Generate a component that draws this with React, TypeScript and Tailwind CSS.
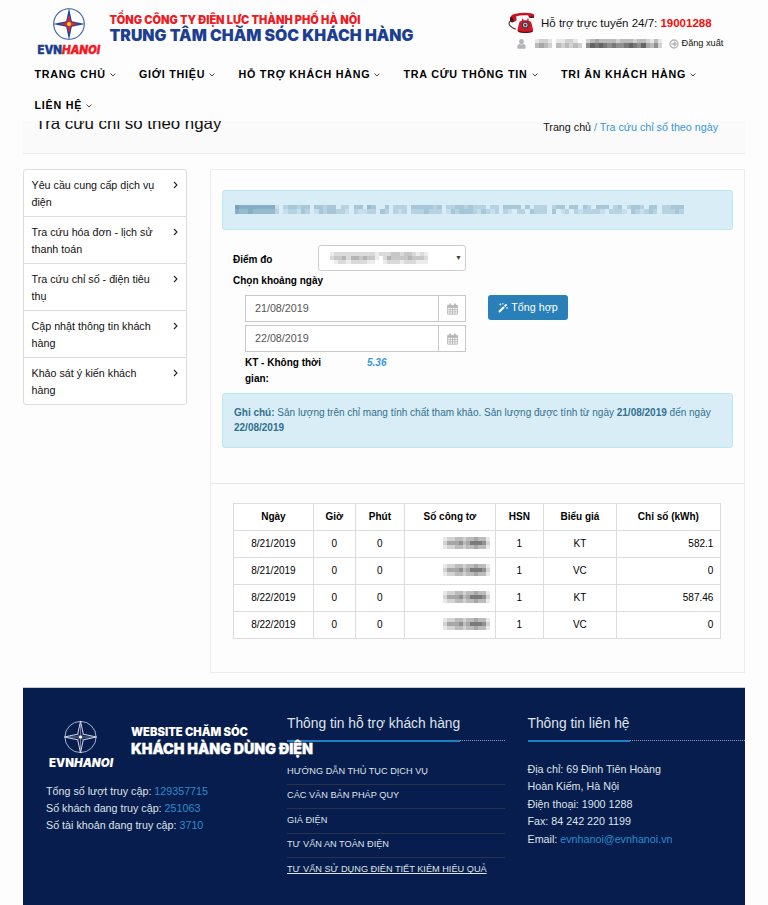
import React from "react";

const navItems = [
  { label: "TRANG CHỦ", w: "w-[104.5px]" },
  { label: "GIỚI THIỆU", w: "w-[99.5px]" },
  { label: "HỖ TRỢ KHÁCH HÀNG", w: "w-[165px]" },
  { label: "TRA CỨU THÔNG TIN", w: "w-[157.5px]" },
  { label: "TRI ÂN KHÁCH HÀNG", w: "w-[160px]" },
  { label: "LIÊN HỆ", w: "w-[80px]" },
];

const sideItems = [
  "Yêu cầu cung cấp dịch vụ điện",
  "Tra cứu hóa đơn - lịch sử thanh toán",
  "Tra cứu chỉ số - điện tiêu thụ",
  "Cập nhật thông tin khách hàng",
  "Khảo sát ý kiến khách hàng",
];

const rows = [
  ["8/21/2019", "KT", "582.1"],
  ["8/21/2019", "VC", "0"],
  ["8/22/2019", "KT", "587.46"],
  ["8/22/2019", "VC", "0"],
];

const links = [
  "HƯỚNG DẪN THỦ TỤC DỊCH VỤ",
  "CÁC VĂN BẢN PHÁP QUY",
  "GIÁ ĐIỆN",
  "TƯ VẤN AN TOÀN ĐIỆN",
  "TƯ VẤN SỬ DỤNG ĐIỆN TIẾT KIỆM HIỆU QUẢ",
];

/* Pixelated stand-in for private values; each digit is the darkness of one block. */
function Mosaic({ lines, cell, color, className }: { lines: string[]; cell: number; color: string; className?: string }) {
  const w = lines[0].length * cell;
  const h = lines.length * cell;
  return (
    <svg width={w} height={h} viewBox={`0 0 ${w} ${h}`} className={className} shapeRendering="crispEdges">
      {lines.map((line, y) =>
        line.split("").map((d, x) => (
          <rect key={`${x}-${y}`} x={x * cell} y={y * cell} width={cell} height={cell} fill={color} opacity={Number(d) / 10} />
        ))
      )}
    </svg>
  );
}

const star = "M0 -16 L2.8 -2.8 L16 0 L2.8 2.8 L0 16 L-2.8 2.8 L-16 0 L-2.8 -2.8Z";

function HeaderLogo() {
  return (
    <svg width="380" height="58" viewBox="0 0 380 58" className="font-['Inter',sans-serif] font-black">
      <g transform="translate(32 24)">
        <circle r="15.3" fill="none" stroke="#3a5ea8" strokeWidth="1.1" />
        <path d={star} fill="#1f4596" />
        <path d="M0 -8 L1.5 -1.5 L8 0 L1.5 1.5 L0 8 L-1.5 1.5 L-8 0 L-1.5 -1.5Z" fill="#e8252b" stroke="#e8252b" strokeWidth=".8" />
        <circle r="2" fill="#ffd42a" />
      </g>
      <text x="0.5" y="53.5" fontSize="11.5" fill="#1d3f91" stroke="#1d3f91" strokeWidth=".3" textLength="24.5" lengthAdjust="spacingAndGlyphs">EVN</text>
      <text x="25" y="53.5" fontSize="11.5" fontStyle="italic" fill="#ee1c25" stroke="#ee1c25" strokeWidth=".3" textLength="38" lengthAdjust="spacingAndGlyphs">HANOI</text>
      <text x="72.5" y="24" fontSize="11.3" fill="#ee1c25" textLength="251" lengthAdjust="spacingAndGlyphs">TỔNG CÔNG TY ĐIỆN LỰC THÀNH PHỐ HÀ NỘI</text>
      <text x="72.5" y="41" fontSize="15.6" fill="#1d3f91" textLength="304" lengthAdjust="spacingAndGlyphs">TRUNG TÂM CHĂM SÓC KHÁCH HÀNG</text>
    </svg>
  );
}

function FooterLogo() {
  return (
    <svg width="270" height="52" viewBox="0 0 270 52" className="font-['Inter',sans-serif] font-black" fill="#fff">
      <g transform="translate(31.5 18)">
        <circle r="15.6" fill="none" stroke="#b9c1d4" strokeWidth=".9" />
        <path d={star} fill="#0d2050" stroke="#e8ebf2" strokeWidth=".9" />
        <path d="M0 -14V14M-14 0H14M-3 -3L3 3M-3 3L3 -3" stroke="#cdd3e0" strokeWidth=".5" />
        <circle r="1.6" />
      </g>
      <text x="0" y="48" fontSize="11.5" textLength="25" lengthAdjust="spacingAndGlyphs">EVN</text>
      <text x="25" y="48" fontSize="11.5" fontStyle="italic" textLength="39" lengthAdjust="spacingAndGlyphs">HANOI</text>
      <text x="82" y="17" fontSize="11.3" textLength="117" lengthAdjust="spacingAndGlyphs">WEBSITE CHĂM SÓC</text>
      <text x="82" y="35" fontSize="14" stroke="#fff" strokeWidth=".3" textLength="182" lengthAdjust="spacingAndGlyphs">KHÁCH HÀNG DÙNG ĐIỆN</text>
    </svg>
  );
}

function Phone() {
  return (
    <svg width="27" height="22" viewBox="0 0 27 22">
      <path d="M3 14.500C.5 13 .3 10 3 8.500M3 14.500c1.500 1 1.800 2.500 5 2.500" fill="none" stroke="#4a2b30" strokeWidth="1.100" />
      <path d="M9.500 17.500 11 11.500c.4-1.800 1.500-2.500 3-2.700V6.800h1.300v1.500h4V6.600h1.300v2.200c1.800.3 2.600 1.200 3 2.700l1.400 6c.2 1.400-.3 2-1.500 2.300-3.500.8-9 .8-12.500.1-1.200-.3-1.700-1-1.500-2.400z" fill="#d01826" />
      <path d="M10 18.500c4 1.800 11 1.800 15 0l-.5 1.500c-4 1.300-10 1.300-14 0z" fill="#5c1018" />
      <path d="M2.500 9.500C1.300 6 2.500 3 6.500 2 12 .6 18 .5 23 1.300c3 .5 3.800 1.500 3 3.400-.4.900-1.200 1.100-2.300.9l-2.500-.5c-.8-.2-.7-.9-.9-1.600C16.500 3 12 3.200 8.500 4.200c-.4 1-.2 2.100.2 3-.2 1.500-1.200 2.300-3 2.800-1.500.4-2.700.4-3.200-.5z" fill="#c71422" />
      <path d="M2.500 9.500C1.900 7.900 1.900 6.500 2.500 5.200c1.300-.4 2 .4 2.500 1.500.4 1.100.4 2.100 0 3.300-1.200.4-2.100.3-2.500-.5z" fill="#461419" />
      <path d="M21 4.900c1.800.6 3.800.8 5-.2" stroke="#461419" strokeWidth="1.200" fill="none" />
      <circle cx="17.300" cy="13" r="3.600" fill="#3d3d50" />
      <circle cx="17.300" cy="13" r="2.300" fill="#c3cadb" />
      <circle cx="17.300" cy="13" r="1.200" fill="#7c2030" />
    </svg>
  );
}

function Calendar() {
  return (
    <svg width="11" height="12" viewBox="0 0 11 12" fill="none" stroke="#b0b0b0" strokeWidth=".8">
      <path d="M.6 2.300h9.800v8.900H.6zM.6 4.500h9.800M.6 6.700h9.800M.6 8.900h9.800M3.100 4.500v6.700M5.500 4.500v6.700M7.900 4.500v6.700" />
      <path d="M.6 3.300h9.800" strokeWidth="1.300" />
      <path d="M3 .6v2.200M8 .6v2.200" strokeWidth="1.500" />
    </svg>
  );
}

function Wand() {
  return (
    <svg width="10" height="10" viewBox="0 0 10 10" fill="none" stroke="#fff">
      <path d="M1 9 6 4" strokeWidth="2.100" />
      <path d="M6.600 3.400 8.600 1.400" strokeWidth="1.800" />
      <path d="M2.300 .4v2M1.300 1.400h2M4.800 .2v1.200M4.200 .8h1.200M9 4.200v1.600M8.200 5h1.600" strokeWidth=".7" />
    </svg>
  );
}

function DateField({ value }: { value: string }) {
  return (
    <div className="flex h-[27px] w-[221px] border border-[#c8c8c8] bg-white">
      <div className="flex flex-1 items-center pl-[9px] text-[10.73px] text-[#555]">{value}</div>
      <div className="flex w-[27px] items-center justify-center border-l border-[#c8c8c8]">
        <Calendar />
      </div>
    </div>
  );
}

function FooterHeading({ text }: { text: string }) {
  return (
    <div className="flex h-[27px] items-start">
      <h4 className="h-[27px] border-b-2 border-[#1e80c3] text-[13.8px] leading-[18px] whitespace-nowrap">{text}</h4>
      <div className="h-[26px] flex-1 border-b border-dotted border-[#8992aa]" />
    </div>
  );
}

export default function App() {
  return (
    <div className="flex h-[905px] w-[768px] flex-col overflow-hidden bg-[#fdfdfd] font-['Liberation_Sans',Arial,sans-serif] text-[10.73px] text-[#111]">
      <header className="h-[121px] shrink-0">
        <div className="flex h-[58px] justify-between">
          <div className="pl-[37px]">
            <HeaderLogo />
          </div>
          <div className="w-[260px] pt-[12px]">
            <div className="flex h-[22px] items-center">
              <Phone />
              <span className="ml-[6px] pt-[2px] text-[11.5px] whitespace-nowrap">
                Hỗ trợ trực tuyến 24/7: <b className="text-[#fb0a0a]">19001288</b>
              </span>
            </div>
            <div className="flex h-[19px] items-center pl-[9px]">
              <svg width="9" height="10" viewBox="0 0 9 10" fill="#b5b5b5">
                <ellipse cx="4.500" cy="2.800" rx="2.300" ry="2.700" />
                <path d="M.3 8.300C.3 6.300 1.200 5 2.500 4.900c1.200 1 2.800 1 4 0C7.800 5 8.700 6.300 8.700 8.300c0 1-.6 1.500-1.400 1.500H1.700C.9 9.800.3 9.300.3 8.300z" />
              </svg>
              <Mosaic
                className="ml-[8.500px]"
                cell={4.25}
                color="#222"
                lines={["122101122100234333323332332131", "343203232320576765655676574352"]}
              />
              <svg width="10" height="10" viewBox="0 0 10 10" fill="none" stroke="#b3b3b3" strokeWidth="1.300" className="ml-[7px]">
                <circle cx="5" cy="5" r="4" />
                <path d="M2.500 5H7M5 2.800 7.200 5 5 7.200" />
              </svg>
              <span className="ml-[2.500px] pt-px text-[9.200px] whitespace-nowrap">Đăng xuất</span>
            </div>
          </div>
        </div>
        <nav className="flex flex-wrap pl-[34.500px]">
          {navItems.map((n) => (
            <div key={n.label} className={`${n.w} flex h-[31px] items-center pt-px text-[10.73px] font-bold tracking-[0.77px] whitespace-nowrap text-black`}>
              {n.label}
              <svg width="6" height="4" viewBox="0 0 6 4" fill="none" stroke="#333" strokeWidth=".9" className="mt-[2px] ml-[4px]">
                <path d="M.6 .6 3 3 5.400 .6" />
              </svg>
            </div>
          ))}
        </nav>
      </header>

      <section className="mx-[23px] flex h-[33px] shrink-0 justify-between overflow-hidden border-b border-[#ececec] bg-[#fafafa] pr-[27px] pl-[12.500px]">
        <h1 className="-mt-[7px] text-[16.860px] leading-[20px] whitespace-nowrap">Tra cứu chỉ số theo ngày</h1>
        <div className="leading-[13px] whitespace-nowrap">
          Trang chủ <span className="text-[#3498db]">/ Tra cứu chỉ số theo ngày</span>
        </div>
      </section>

      <main className="mx-[23px] mt-[15px] flex h-[518px] shrink-0 items-start justify-between">
        <aside className="w-[164px] rounded-[3px] border border-[#ddd] bg-white">
          {sideItems.map((s, i) => (
            <div key={s} className={`flex h-[47px] justify-between pt-[7px] pr-[8px] pl-[7.500px] leading-[17px] ${i < 4 ? "border-b border-[#ddd]" : "-mb-px"}`}>
              <span className="w-[130px]">{s}</span>
              <svg width="5" height="8" viewBox="0 0 5 8" fill="none" stroke="#222" strokeWidth="1.100" className="mt-[4px]">
                <path d="M1 1 4 4 1 7" />
              </svg>
            </div>
          ))}
        </aside>

        <div className="h-[504px] w-[535.500px] border border-[#ececec]">
          <div className="h-[314px] border-b border-[#e6e6e6] px-[11.500px] pt-[20px]">
            <div className="h-[40px] rounded-[3px] border border-[#bce8f1] bg-[#d9edf7] pt-[14px] pl-[12px]">
              <Mosaic
                cell={4.4}
                color="#31708f"
                lines={[
                  "655555555102332330332330220330430030222033333230223323222022033330302220233033032033302302332033022333",
                  "544544444201221320132332210211220320212022232220132333213212021022032220301202122221022210321232022232",
                ]}
              />
            </div>
            <div className="flex h-[43px] items-start pt-[15px] pl-[11px] text-[10px] font-bold text-black">
              <span className="w-[85px] pt-[7px]">Điểm đo</span>
              <div className="flex h-[26px] w-[148px] items-center justify-between rounded-[3px] border border-[#ccc] bg-white pr-[3px] pl-[11px]">
                <Mosaic cell={4.1} color="#444" lines={["1222222222212223323321210", "2334244343310243333433320", "0122122221100122212221110"]} />
                <span className="text-[7px] font-normal text-[#444]">▼</span>
              </div>
            </div>
            <div className="mb-[7px] pl-[11px] text-[10px] leading-[15px] font-bold text-black">Chọn khoảng ngày</div>
            <div className="flex pl-[23px]">
              <div className="flex w-[221px] flex-col gap-[3px]">
                <DateField value="21/08/2019" />
                <DateField value="22/08/2019" />
                <div className="flex text-[10px] leading-[15.500px] font-bold text-black">
                  <div className="w-[122px] pr-[35px]">KT - Không thời gian:</div>
                  <i className="text-[#3498db]">5.36</i>
                </div>
              </div>
              <button className="ml-[22px] flex h-[25px] w-[80px] items-center justify-center gap-[3px] rounded-[3px] bg-[#2980b9] text-[10.73px] text-white">
                <Wand />
                Tổng hợp
              </button>
            </div>
            <div className="mt-[7px] h-[55px] rounded-[3px] border border-[#bce8f1] bg-[#d9edf7] pt-[11px] pl-[11px] text-[10px] leading-[15.300px] text-[#31708f]">
              <b>Ghi chú:</b> Sản lượng trên chỉ mang tính chất tham khảo. Sản lượng được tính từ ngày <b>21/08/2019</b> đến ngày
              <br />
              <b>22/08/2019</b>
            </div>
          </div>
          <div className="pt-[19px] pl-[22.400px]">
            <table className="w-[488px] table-fixed border-collapse bg-white text-center text-[10px] text-black">
              <colgroup>
                <col className="w-[80px]" />
                <col className="w-[42px]" />
                <col className="w-[49px]" />
                <col className="w-[91px]" />
                <col className="w-[48px]" />
                <col className="w-[73px]" />
                <col className="w-[104px]" />
              </colgroup>
              <thead>
                <tr className="h-[27px]">
                  {["Ngày", "Giờ", "Phút", "Số công tơ", "HSN", "Biểu giá", "Chỉ số (kWh)"].map((h) => (
                    <th key={h} className="border border-[#ddd] p-0 pb-[2px]">{h}</th>
                  ))}
                </tr>
              </thead>
              <tbody>
                {rows.map((r, i) => (
                  <tr key={i} className="h-[27px]">
                    <td className="border border-[#ddd] p-0 pb-[2px]">{r[0]}</td>
                    <td className="border border-[#ddd] p-0 pb-[2px]">0</td>
                    <td className="border border-[#ddd] p-0 pb-[2px]">0</td>
                    <td className="border border-[#ddd] p-0 pb-[2px]">
                      <Mosaic className="mr-[5px] ml-auto" cell={3.9} color="#222" lines={["122332334331", "244453466652", "122332334331"]} />
                    </td>
                    <td className="border border-[#ddd] p-0 pb-[2px]">1</td>
                    <td className="border border-[#ddd] p-0 pb-[2px]">{r[1]}</td>
                    <td className="border border-[#ddd] p-0 pr-[6.500px] pb-[2px] text-right">{r[2]}</td>
                  </tr>
                ))}
              </tbody>
            </table>
          </div>
        </div>
      </main>

      <footer className="mx-[23px] flex flex-1 border-t border-[#c5c8dc] bg-[#071d4d] text-[#dfe3ea]">
        <div className="w-[264px] shrink-0 pt-[31px]">
          <div className="relative z-10 w-[300px] pl-[26px]">
            <FooterLogo />
          </div>
          <div className="pt-[12px] pl-[23px] leading-[17px]">
            <p>Tổng số lượt truy cập: <span className="text-[#2c8ccd]">129357715</span></p>
            <p>Số khách đang truy cập: <span className="text-[#2c8ccd]">251063</span></p>
            <p>Số tài khoản đang truy cập: <span className="text-[#2c8ccd]">3710</span></p>
          </div>
        </div>
        <div className="w-[218px] shrink-0 pt-[27px]">
          <FooterHeading text="Thông tin hỗ trợ khách hàng" />
          <ul className="pt-[18px] text-[9.200px]">
            {links.map((l, i) => (
              <li key={l} className={`flex h-[24.500px] items-center whitespace-nowrap ${i < 4 ? "border-b border-[#27324c]" : "underline"}`}>{l}</li>
            ))}
          </ul>
        </div>
        <div className="ml-[22.500px] flex-1 pt-[27px]">
          <FooterHeading text="Thông tin liên hệ" />
          <div className="pt-[18.500px] leading-[17.600px]">
            <p>Địa chỉ: 69 Đinh Tiên Hoàng</p>
            <p>Hoàn Kiếm, Hà Nội</p>
            <p>Điện thoại: 1900 1288</p>
            <p>Fax: 84 242 220 1199</p>
            <p>Email: <span className="text-[#2c8ccd]">evnhanoi@evnhanoi.vn</span></p>
          </div>
        </div>
      </footer>
    </div>
  );
}
